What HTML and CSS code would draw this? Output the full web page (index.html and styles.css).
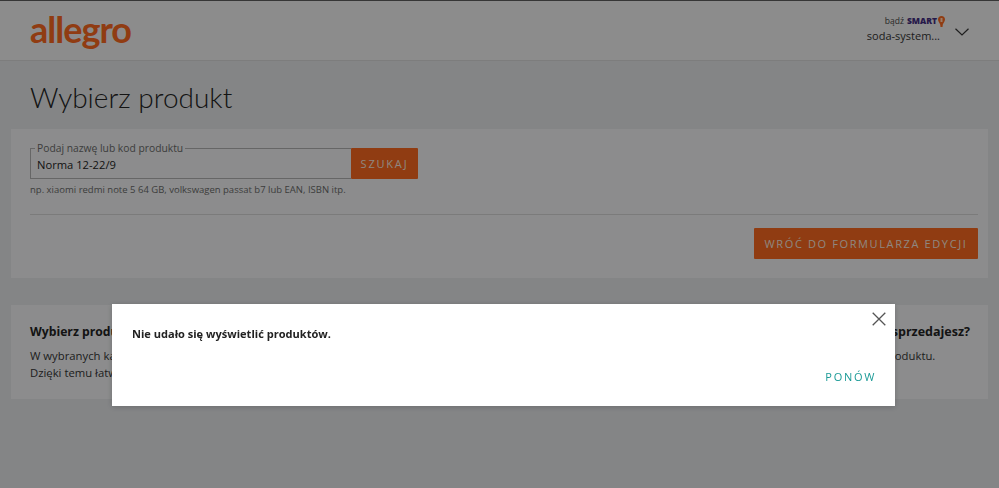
FILE: index.html
```html
<!DOCTYPE html>
<html lang="pl">
<head>
    <meta charset="UTF-8">
    <meta name="viewport" content="width=device-width, initial-scale=1.0">
    <title>Wybierz produkt</title>
    <link rel="stylesheet" href="styles.css">
</head>
<body>
    <header class="top-bar">
        <div class="logo">allegro</div>
        <div class="account">
            <div class="account-text">
                <div class="smart-line">
                    <span>bądź</span> <b class="smart-word">SMART</b>
                    <svg class="smart-pin" width="7" height="11" viewBox="0 0 7 11">
                        <path d="M3.5 0C1.4 0 0 1.400 0 3.400c0 2 1.500 3.100 2.200 5.100l.3 2.500h2l.3-2.500C5.500 6.500 7 5.400 7 3.400 7 1.400 5.600 0 3.500 0z" fill="#f0641e"/>
                        <rect x="2.500" y="2" width="2" height="4" fill="#ffd0b0"/>
                    </svg>
                </div>
                <div class="account-name">soda-system...</div>
            </div>
            <svg class="chevron" width="14" height="8" viewBox="0 0 14 8">
                <path d="M.5.8 7 7 13.500.8" fill="none" stroke="#333" stroke-width="1.200"/>
            </svg>
        </div>
    </header>

    <main class="page">
        <h1>Wybierz produkt</h1>

        <section class="card search-card">
            <div class="search-row">
                <fieldset class="search-field">
                    <legend>Podaj nazwę lub kod produktu</legend>
                    <div class="search-value">Norma 12-22/9</div>
                </fieldset>
                <button class="btn btn-search">Szukaj</button>
            </div>
            <p class="hint">np. xiaomi redmi note 5 64 GB, volkswagen passat b7 lub EAN, ISBN itp.</p>
            <div class="card-actions">
                <button class="btn btn-back">Wróć do formularza edycji</button>
            </div>
        </section>

        <section class="card info-card">
            <div class="info-col">
                <h2>Wybierz produkt z katalogu</h2>
                <p>W wybranych kategoriach wybierz produkt z katalogu.<br>Dzięki temu łatwiej wystawisz ofertę.</p>
            </div>
            <div class="info-col">
                <h2>Nie ma produktu, który sprzedajesz?</h2>
                <p>Dodaj ofertę i wypisz dane produktu.</p>
            </div>
        </section>
    </main>

    <div class="overlay">
        <div class="modal">
            <button class="modal-close" aria-label="Zamknij">
                <svg width="14" height="14" viewBox="0 0 14 14">
                    <path d="M.7.700l12.600 12.600M13.300.700.700 13.300" fill="none" stroke="#555" stroke-width="1.300"/>
                </svg>
            </button>
            <p class="modal-text">Nie udało się wyświetlić produktów.</p>
            <div class="modal-actions">
                <button class="btn-retry">Ponów</button>
            </div>
        </div>
    </div>
</body>
</html>
```

FILE: styles.css
```css
* {
    box-sizing: border-box;
}

html, body {
    height: 100%;
}

body {
    margin: 0;
    overflow: hidden;
    background: #dcdee0;
    color: #222;
    font-family: "Open Sans", sans-serif;
    border-top: 1px solid #5a5a5a;
}

.top-bar {
    height: 60px;
    padding: 0 30px;
    display: flex;
    justify-content: space-between;
    align-items: center;
    background: #e9e9e9;
    border-bottom: 1px solid #d0d0d0;
}

.logo {
    font-family: "Lato", sans-serif;
    font-weight: 700;
    font-size: 36px;
    line-height: 40px;
    letter-spacing: -1px;
    color: #f0641e;
    margin-bottom: 3px;
}

.account {
    display: flex;
    align-items: center;
    gap: 15px;
    margin-bottom: 2px;
}

.account-text {
    text-align: right;
}

.smart-line {
    font-size: 8.500px;
    line-height: 12px;
    color: #444;
    display: flex;
    justify-content: flex-end;
    align-items: center;
    gap: 3px;
    margin-right: -5px;
}

.smart-word {
    color: #3f2b7a;
    font-weight: 800;
}

.smart-pin {
    margin-left: -2px;
}

.account-name {
    font-size: 11px;
    line-height: 17px;
    color: #333;
}

.chevron {
    margin-top: 4px;
}

.page {
    padding: 0 11px;
}

h1 {
    margin: 0;
    padding: 16px 19px 0;
    height: 68px;
    font-family: "Lato", sans-serif;
    font-weight: 300;
    font-size: 28px;
    line-height: 40px;
    color: #222;
}

.card {
    background: #e9eaeb;
}

.search-card {
    height: 149px;
    padding: 13px 10px 0 19px;
}

.search-row {
    display: flex;
    align-items: flex-end;
}

.search-field {
    width: 321px;
    height: 37px;
    margin: 0;
    padding: 0 4px;
    border: 1px solid #aaa;
    border-right: 0;
}

.search-field legend {
    padding: 0 2px;
    font-size: 10.300px;
    line-height: 12px;
    color: #666;
}

.search-value {
    font-size: 11.200px;
    line-height: 17px;
    padding: 2px 0 0 2px;
    color: #222;
}

.btn {
    border: 0;
    border-radius: 1px;
    background: #f0641e;
    color: #efe0d6;
    font-family: "Open Sans", sans-serif;
    text-transform: uppercase;
    letter-spacing: 1.620px;
    cursor: pointer;
}

.btn-search {
    width: 67px;
    height: 31px;
    padding: 0;
    font-size: 11px;
    letter-spacing: 1.800px;
}

.hint {
    margin: 4px 0 0;
    font-size: 9.500px;
    line-height: 13px;
    color: #666;
}

.card-actions {
    margin-top: 18px;
    padding-top: 13px;
    border-top: 1px solid #cdcdcd;
    display: flex;
    justify-content: flex-end;
}

.btn-back {
    width: 224px;
    height: 31px;
    padding: 0;
    font-size: 11px;
}

.info-card {
    margin-top: 27px;
    height: 94px;
    padding: 18px 18px 0 19px;
    display: flex;
    justify-content: space-between;
}

.info-col h2 {
    margin: 0;
    font-size: 12.500px;
    line-height: 18px;
    font-weight: 700;
}

.info-col:first-child h2 {
    font-size: 12.200px;
}

.info-col p {
    margin: 6px 0 0;
    font-size: 11.300px;
    line-height: 17px;
    color: #333;
}

.overlay {
    position: fixed;
    inset: 0;
    padding: 304px 0 0 8px;
    display: flex;
    justify-content: center;
    align-items: flex-start;
    background: rgba(0, 0, 0, 0.4);
}

.modal {
    position: relative;
    width: 783px;
    height: 102px;
    padding: 21px 20px 0;
    background: #fff;
    box-shadow: 0 1px 6px rgba(0, 0, 0, 0.2);
}

.modal-close {
    position: absolute;
    top: 8px;
    right: 9px;
    width: 14px;
    height: 14px;
    padding: 0;
    border: 0;
    background: none;
    line-height: 0;
}

.modal-text {
    margin: 0;
    font-size: 11.050px;
    line-height: 17px;
    font-weight: 700;
    color: #222;
}

.modal-actions {
    margin-top: 27px;
    display: flex;
    justify-content: flex-end;
}

.btn-retry {
    padding: 0;
    border: 0;
    margin-right: -1px;
    background: none;
    color: #1a9a96;
    font-family: "Open Sans", sans-serif;
    font-size: 11px;
    line-height: 16px;
    letter-spacing: 1.700px;
    text-transform: uppercase;
}
```
